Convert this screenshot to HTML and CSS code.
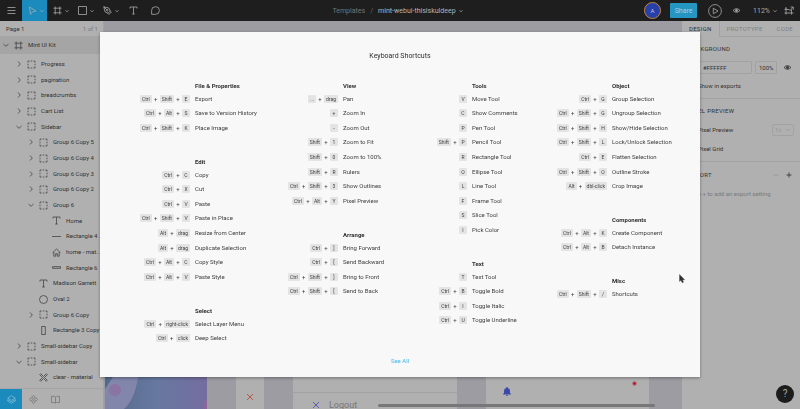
FILE: index.html
```html
<!DOCTYPE html>
<html lang="en">
<head>
<meta charset="utf-8">
<title>mint-webui-thisiskuldeep</title>
<link rel="stylesheet" href="styles.css">
</head>
<body>
<svg class="defs" aria-hidden="true">
  <symbol id="caret" viewBox="0 0 6 6"><path d="M1.5 2.3 3 3.8 4.5 2.3"/></symbol>
  <symbol id="right" viewBox="0 0 8 8"><path d="M3 1.5 5.3 4 3 6.5"/></symbol>
  <symbol id="down" viewBox="0 0 8 8"><path d="M1.5 3 4 5.3 6.5 3"/></symbol>
  <symbol id="group" viewBox="0 0 9 9"><path d="M1 2.5V1h1.500M3.700 1h1.600M6.500 1H8v1.500M8 3.700v1.600M8 6.500V8H6.500M5.300 8H3.700M2.500 8H1V6.500M1 5.300V3.700"/></symbol>
  <symbol id="frame" viewBox="0 0 9 9"><path d="M2.200.5v8M6.800.5v8M.5 2.200h8M.5 6.800h8"/></symbol>
  <symbol id="text" viewBox="0 0 9 9"><path d="M1 2.500V1h7v1.500M4.500 1v7M3.200 8h2.600"/></symbol>
  <symbol id="eye" viewBox="0 0 9 9"><path d="M1 4.500Q4.500.8 8 4.500Q4.500 8.200 1 4.500Z"/><circle cx="4.500" cy="4.500" r="1.100" fill="currentColor"/></symbol>
</svg>

<header class="toolbar">
  <div class="tools">
    <button class="menu" aria-label="Menu"><svg viewBox="0 0 9 9"><path d="M.5 1.500h8M.5 4.500h8M.5 7.500h8"/></svg></button>
    <button class="tool active" aria-label="Move"><svg viewBox="0 0 9 9"><path d="M1.500 1 8 5 4.700 5.700 2.500 8.300Z"/></svg><svg class="caret"><use href="#caret"/></svg></button>
    <button class="tool" aria-label="Frame"><svg><use href="#frame"/></svg><svg class="caret"><use href="#caret"/></svg></button>
    <button class="tool" aria-label="Rectangle"><svg viewBox="0 0 9 9"><path d="M.5.5h8v8h-8Z"/></svg><svg class="caret"><use href="#caret"/></svg></button>
    <button class="tool" aria-label="Pen"><svg viewBox="0 0 9 9"><path d="M.8.8 5.800 2 7.300 5 5 7.300 2 5.800ZM.8.8 4 4M5 7.300 6 8.400 8.400 6 7.300 5"/><circle cx="4.300" cy="4.300" r=".8"/></svg><svg class="caret"><use href="#caret"/></svg></button>
    <button class="single" aria-label="Text"><svg><use href="#text"/></svg></button>
    <button class="single" aria-label="Comment"><svg viewBox="0 0 9 9"><path d="M.6 8.300V4.500A3.900 3.800 0 1 1 4.500 8.300Z"/></svg></button>
  </div>
  <div class="crumbs"><a href="#">Templates</a><span>/</span><b>mint-webui-thisiskuldeep</b><svg class="caret"><use href="#caret"/></svg></div>
  <div class="actions">
    <span class="avatar">A</span>
    <button class="share">Share</button>
    <button class="play" aria-label="Present"><svg viewBox="0 0 14 14"><circle cx="7" cy="7" r="6.400"/><path d="M5.300 4.200 10 7 5.300 9.800Z"/></svg></button>
    <button class="view" aria-label="View"><svg><use href="#eye"/></svg></button>
    <button class="percent">112%<svg class="caret"><use href="#caret"/></svg></button>
    <button class="snap" aria-label="Layout grid"><svg viewBox="0 0 10 9"><path d="M2 2v6.500M7.500 3.500v5M.5 3.500h5M.5 7h9M5.500 5.200 9 1.200M6.500 1h2.800v2.800M1 2h2"/></svg></button>
  </div>
</header>

<main class="workspace">
  <aside class="layers">
    <div class="page"><span>Page 1</span><span class="count">1 of 1</span></div>
    <div class="layer root"><svg class="chev"><use href="#down"/></svg><svg><use href="#frame"/></svg><span>Mint UI Kit</span></div>
    <ul class="tree">
      <li class="layer l1"><svg class="chev"><use href="#right"/></svg><svg><use href="#group"/></svg><span>Progress</span></li>
      <li class="layer l1"><svg class="chev"><use href="#right"/></svg><svg><use href="#group"/></svg><span>pagination</span></li>
      <li class="layer l1"><svg class="chev"><use href="#right"/></svg><svg><use href="#group"/></svg><span>breadcrumbs</span></li>
      <li class="layer l1"><svg class="chev"><use href="#right"/></svg><svg><use href="#group"/></svg><span>Cart List</span></li>
      <li class="layer l1"><svg class="chev"><use href="#down"/></svg><svg><use href="#group"/></svg><span>Sidebar</span></li>
      <li class="layer l2"><svg class="chev"><use href="#right"/></svg><svg><use href="#group"/></svg><span>Group 6 Copy 5</span></li>
      <li class="layer l2"><svg class="chev"><use href="#right"/></svg><svg><use href="#group"/></svg><span>Group 6 Copy 4</span></li>
      <li class="layer l2"><svg class="chev"><use href="#right"/></svg><svg><use href="#group"/></svg><span>Group 6 Copy 3</span></li>
      <li class="layer l2"><svg class="chev"><use href="#right"/></svg><svg><use href="#group"/></svg><span>Group 6 Copy 2</span></li>
      <li class="layer l2"><svg class="chev"><use href="#down"/></svg><svg><use href="#group"/></svg><span>Group 6</span></li>
      <li class="layer l3"><svg class="chev"></svg><svg><use href="#text"/></svg><span>Home</span></li>
      <li class="layer l3"><svg class="chev"></svg><svg viewBox="0 0 9 9"><path d="M0 4.500h9"/></svg><span>Rectangle 4 ...</span></li>
      <li class="layer l3"><svg class="chev"></svg><svg viewBox="0 0 9 9"><path d="M.5 4.800 4.500 1l4 3.800M1.800 4v4.200h1.900V5.600h1.600v2.600h1.900V4"/></svg><span>home - mat...</span></li>
      <li class="layer l3"><svg class="chev"></svg><svg viewBox="0 0 9 9"><path d="M.5 3.700h8v1.600h-8Z"/></svg><span>Rectangle 6</span></li>
      <li class="layer l2"><svg class="chev"></svg><svg><use href="#text"/></svg><span>Madison Garrett</span></li>
      <li class="layer l2"><svg class="chev"></svg><svg viewBox="0 0 9 9"><circle cx="4.500" cy="4.500" r="4"/></svg><span>Oval 2</span></li>
      <li class="layer l2"><svg class="chev"><use href="#right"/></svg><svg><use href="#group"/></svg><span>Group 6 Copy</span></li>
      <li class="layer l2"><svg class="chev"></svg><svg viewBox="0 0 9 9"><path d="M2.700.5h3.600v8H2.700Z"/></svg><span>Rectangle 3 Copy</span></li>
      <li class="layer l1"><svg class="chev"><use href="#right"/></svg><svg><use href="#group"/></svg><span>Small-sidebar Copy</span></li>
      <li class="layer l1"><svg class="chev"><use href="#down"/></svg><svg><use href="#group"/></svg><span>Small-sidebar</span></li>
      <li class="layer l2"><svg class="chev"></svg><svg viewBox="0 0 9 9"><path d="M.7 1.700 1.700.7 4.500 3.500 7.300.7 8.300 1.700 5.500 4.500 8.300 7.300 7.300 8.300 4.500 5.500 1.700 8.300.7 7.300 3.500 4.500Z"/></svg><span>clear - material</span></li>
    </ul>
    <nav class="libs">
      <button class="on" aria-label="Layers"><svg viewBox="0 0 9 9"><path d="M4.500.7 8.300 3 4.500 5.300.7 3ZM.7 4.500v1.500l3.800 2.300L8.300 6V4.500M.7 4.500l3.800 2.300 3.800-2.300"/></svg></button>
      <button aria-label="Components"><svg viewBox="0 0 9 9"><path d="M4.500.3 6.200 2 4.500 3.700 2.800 2ZM4.500 5.300 6.200 7 4.500 8.700 2.800 7ZM2 2.800 3.700 4.500 2 6.200.3 4.500ZM7 2.800 8.700 4.500 7 6.200 5.300 4.500Z"/></svg></button>
      <button aria-label="Team library"><svg viewBox="0 0 9 9"><path d="M.5 1.300h3l1 .7 1-.7h3v6.200h-3l-1 .7-1-.7h-3ZM4.500 2v6"/></svg></button>
    </nav>
  </aside>

  <section class="canvas">
    <div class="photo"><svg viewBox="0 0 102 372" preserveAspectRatio="xMidYMax slice">
      <defs><linearGradient id="sky"><stop offset="0" stop-color="#536989"/><stop offset=".5" stop-color="#6778a0"/><stop offset="1" stop-color="#746da0"/></linearGradient></defs>
      <rect width="102" height="372" fill="url(#sky)"/><path d="M0 352 8 340H33Q30 362 19 372H0Z" fill="#8286ab"/><circle cx="10" cy="353" r="6" fill="#8a74a4"/><path d="M102 362q-6 5-4 10h4Z" fill="#8a669a"/></svg></div>
    <div class="board narrow"><svg class="cross red" viewBox="0 0 8 8"><path d="M1 1l6 6M7 1 1 7"/></svg></div>
    <div class="board logout"><div class="entry"><svg class="cross blue" viewBox="0 0 8 8"><path d="M1 1l6 6M7 1 1 7"/></svg><span>Logout</span></div></div>
    <div class="board alerts"><svg class="bell" viewBox="0 0 8 9"><path d="M4 0q.8 0 .8 1Q7 1.700 7 4v2l1 1v.5H0V7l1-1V4q0-2.300 2.200-3Q3.200 0 4 0ZM3 8h2Q4.800 9 4 9T3 8Z"/></svg><i class="dot"></i></div>
    <div class="scroll"></div>
  </section>

  <aside class="inspector">
    <nav class="tabs"><button class="on">DESIGN</button><button>PROTOTYPE</button><button>CODE</button></nav>
    <section class="block">
      <h2>BACKGROUND</h2>
      <div class="fill"><input class="hex" aria-label="Background colour" value="#FFFFFF"><input class="opacity" aria-label="Opacity" value="100%"><svg><use href="#eye"/></svg></div>
      <label class="check"><input type="checkbox">Show in exports</label>
    </section>
    <section class="block">
      <h2>PIXEL PREVIEW</h2>
      <div class="line"><label class="check"><input type="checkbox">Pixel Preview</label><span class="scale"><select aria-label="Preview scale"><option>1x</option></select><svg class="caret"><use href="#caret"/></svg></span></div>
      <label class="check"><input type="checkbox">Pixel Grid</label>
    </section>
    <section class="block">
      <div class="line"><h2>EXPORT</h2><span class="pm"><svg class="off" viewBox="0 0 6 6"><path d="M.5 3h5"/></svg><svg viewBox="0 0 6 6"><path d="M.5 3h5M3 .5v5"/></svg></span></div>
      <p>Click + to add an export setting</p>
    </section>
  </aside>
</main>

<button class="help" aria-label="Help">?</button>

<div class="overlay">
<div class="dialog" role="dialog" aria-labelledby="dlg-title">
  <h1 id="dlg-title">Keyboard Shortcuts</h1>
  <div class="columns">
    <div class="column">
      <section><h3>File &amp; Properties</h3><ul>
        <li><span><kbd>Ctrl</kbd><i>+</i><kbd>Shift</kbd><i>+</i><kbd>E</kbd></span>Export</li>
        <li><span><kbd>Ctrl</kbd><i>+</i><kbd>Alt</kbd><i>+</i><kbd>S</kbd></span>Save to Version History</li>
        <li><span><kbd>Ctrl</kbd><i>+</i><kbd>Shift</kbd><i>+</i><kbd>K</kbd></span>Place Image</li>
      </ul></section>
      <section><h3>Edit</h3><ul>
        <li><span><kbd>Ctrl</kbd><i>+</i><kbd>C</kbd></span>Copy</li>
        <li><span><kbd>Ctrl</kbd><i>+</i><kbd>X</kbd></span>Cut</li>
        <li><span><kbd>Ctrl</kbd><i>+</i><kbd>V</kbd></span>Paste</li>
        <li><span><kbd>Ctrl</kbd><i>+</i><kbd>Shift</kbd><i>+</i><kbd>V</kbd></span>Paste in Place</li>
        <li><span><kbd>Alt</kbd><i>+</i><kbd>drag</kbd></span>Resize from Center</li>
        <li><span><kbd>Alt</kbd><i>+</i><kbd>drag</kbd></span>Duplicate Selection</li>
        <li><span><kbd>Ctrl</kbd><i>+</i><kbd>Alt</kbd><i>+</i><kbd>C</kbd></span>Copy Style</li>
        <li><span><kbd>Ctrl</kbd><i>+</i><kbd>Alt</kbd><i>+</i><kbd>V</kbd></span>Paste Style</li>
      </ul></section>
      <section><h3>Select</h3><ul>
        <li><span><kbd>Ctrl</kbd><i>+</i><kbd>right-click</kbd></span>Select Layer Menu</li>
        <li><span><kbd>Ctrl</kbd><i>+</i><kbd>click</kbd></span>Deep Select</li>
      </ul></section>
    </div>
    <div class="column">
      <section><h3>View</h3><ul>
        <li><span><kbd>...</kbd><i>+</i><kbd>drag</kbd></span>Pan</li>
        <li><span><kbd>+</kbd></span>Zoom In</li>
        <li><span><kbd>-</kbd></span>Zoom Out</li>
        <li><span><kbd>Shift</kbd><i>+</i><kbd>1</kbd></span>Zoom to Fit</li>
        <li><span><kbd>Shift</kbd><i>+</i><kbd>0</kbd></span>Zoom to 100%</li>
        <li><span><kbd>Shift</kbd><i>+</i><kbd>R</kbd></span>Rulers</li>
        <li><span><kbd>Ctrl</kbd><i>+</i><kbd>Shift</kbd><i>+</i><kbd>3</kbd></span>Show Outlines</li>
        <li><span><kbd>Ctrl</kbd><i>+</i><kbd>Alt</kbd><i>+</i><kbd>Y</kbd></span>Pixel Preview</li>
      </ul></section>
      <section><h3>Arrange</h3><ul>
        <li><span><kbd>Ctrl</kbd><i>+</i><kbd>]</kbd></span>Bring Forward</li>
        <li><span><kbd>Ctrl</kbd><i>+</i><kbd>[</kbd></span>Send Backward</li>
        <li><span><kbd>Ctrl</kbd><i>+</i><kbd>Shift</kbd><i>+</i><kbd>]</kbd></span>Bring to Front</li>
        <li><span><kbd>Ctrl</kbd><i>+</i><kbd>Shift</kbd><i>+</i><kbd>[</kbd></span>Send to Back</li>
      </ul></section>
    </div>
    <div class="column">
      <section><h3>Tools</h3><ul>
        <li><span><kbd>V</kbd></span>Move Tool</li>
        <li><span><kbd>C</kbd></span>Show Comments</li>
        <li><span><kbd>P</kbd></span>Pen Tool</li>
        <li><span><kbd>Shift</kbd><i>+</i><kbd>P</kbd></span>Pencil Tool</li>
        <li><span><kbd>R</kbd></span>Rectangle Tool</li>
        <li><span><kbd>O</kbd></span>Ellipse Tool</li>
        <li><span><kbd>L</kbd></span>Line Tool</li>
        <li><span><kbd>F</kbd></span>Frame Tool</li>
        <li><span><kbd>S</kbd></span>Slice Tool</li>
        <li><span><kbd>I</kbd></span>Pick Color</li>
      </ul></section>
      <section><h3>Text</h3><ul>
        <li><span><kbd>T</kbd></span>Text Tool</li>
        <li><span><kbd>Ctrl</kbd><i>+</i><kbd>B</kbd></span>Toggle Bold</li>
        <li><span><kbd>Ctrl</kbd><i>+</i><kbd>I</kbd></span>Toggle Italic</li>
        <li><span><kbd>Ctrl</kbd><i>+</i><kbd>U</kbd></span>Toggle Underline</li>
      </ul></section>
    </div>
    <div class="column">
      <section><h3>Object</h3><ul>
        <li><span><kbd>Ctrl</kbd><i>+</i><kbd>G</kbd></span>Group Selection</li>
        <li><span><kbd>Ctrl</kbd><i>+</i><kbd>Shift</kbd><i>+</i><kbd>G</kbd></span>Ungroup Selection</li>
        <li><span><kbd>Ctrl</kbd><i>+</i><kbd>Shift</kbd><i>+</i><kbd>H</kbd></span>Show/Hide Selection</li>
        <li><span><kbd>Ctrl</kbd><i>+</i><kbd>Shift</kbd><i>+</i><kbd>L</kbd></span>Lock/Unlock Selection</li>
        <li><span><kbd>Ctrl</kbd><i>+</i><kbd>E</kbd></span>Flatten Selection</li>
        <li><span><kbd>Ctrl</kbd><i>+</i><kbd>Shift</kbd><i>+</i><kbd>O</kbd></span>Outline Stroke</li>
        <li><span><kbd>Alt</kbd><i>+</i><kbd>dbl-click</kbd></span>Crop Image</li>
      </ul></section>
      <section><h3>Components</h3><ul>
        <li><span><kbd>Ctrl</kbd><i>+</i><kbd>Alt</kbd><i>+</i><kbd>K</kbd></span>Create Component</li>
        <li><span><kbd>Ctrl</kbd><i>+</i><kbd>Alt</kbd><i>+</i><kbd>B</kbd></span>Detach Instance</li>
      </ul></section>
      <section><h3>Misc</h3><ul>
        <li><span><kbd>Ctrl</kbd><i>+</i><kbd>Shift</kbd><i>+</i><kbd>/</kbd></span>Shortcuts</li>
      </ul></section>
    </div>
  </div>
  <a class="all" href="#">See All</a>
  <svg class="pointer" viewBox="0 0 6 9"><path d="M.5.500v7L2 6.300 3.200 8.800 4.500 8.200 3.500 5.800H5.700Z"/></svg>
</div>
</div>
</body>
</html>
```
FILE: styles.css
```css
* { box-sizing: border-box; margin: 0; padding: 0; }
body {
  display: grid;
  grid-template-rows: 21px minmax(0, 1fr);
  height: 100vh;
  overflow: hidden;
  font: 6px/12px Roboto, sans-serif;
  color: #303030;
  background: #9d9da0;
}
ul { list-style: none; }
button, input, select { font: inherit; color: inherit; border: 0; background: none; }
svg { width: 9px; height: 9px; flex: none; fill: none; stroke: currentColor; stroke-width: 0.8; display: block; }
.defs { position: absolute; width: 0; height: 0; }
.caret { width: 6px; height: 6px; }

/* Top toolbar */
.toolbar {
  display: grid;
  grid-template-columns: 1fr auto 1fr;
  background: #1e1e1e;
  color: #a9a9a9;
  font-size: 7px;
}
.tools, .crumbs, .actions { display: flex; align-items: center; }
.tools button { display: flex; align-items: center; height: 21px; }
.tools .menu { width: 22px; justify-content: center; }
.tools .tool { width: 25px; gap: 2px; padding-left: 6px; }
.tools .single { width: 22px; justify-content: center; }
.tools .active { background: #1b8bbd; }
.crumbs { gap: 5px; padding-right: 4px; }
.crumbs a { color: #747474; text-decoration: none; }
.crumbs span { color: #666; }
.crumbs b { font-weight: 400; color: #b5b5b5; }
.crumbs .caret { margin-left: -3px; }
.actions { justify-content: flex-end; padding-right: 6px; }
.avatar {
  width: 17px; height: 17px;
  border: 1px solid #c2843c;
  border-radius: 50%;
  background: #2740a8;
  color: #bcc4e6;
  text-align: center;
  line-height: 15px;
  font-size: 6px;
}
.share { width: 27px; height: 15px; margin-left: 9px; border-radius: 1px; background: #2595c2; color: #a6cfe0; }
.play { margin-left: 11px; }
.play svg { width: 14px; height: 14px; }
.view { margin-left: 10px; }
.percent { display: flex; align-items: center; gap: 2px; margin-left: 12px; }
.snap { margin-left: 6px; }
.snap svg { width: 10px; }

.workspace {
  display: grid;
  grid-template-columns: 104px 1fr 118px;
  grid-template-rows: minmax(0, 1fr);
}

/* Layers panel */
.layers { display: flex; flex-direction: column; min-height: 0; background: #b0b0b0; border-right: 1px solid #a2a2a2; }
.page { display: flex; flex: none; justify-content: space-between; align-items: center; height: 15px; padding: 0 5px 0 6px; }
.count { color: #777; }
.layer { display: flex; flex: none; align-items: center; height: 16px; padding-right: 4px; white-space: nowrap; }
.layer svg { margin-left: 4px; color: #444; }
.layer .chev { width: 8px; height: 8px; margin-left: 0; }
.layer span { margin-left: 5px; }
.root { height: 18px; padding-left: 2px; background: #a5a5a5; }
.tree { flex: 1; padding-top: 2px; min-height: 0; overflow: hidden; }
.tree .layer:nth-child(3n+2) { height: 15px; }
.l1 { padding-left: 15px; }
.l2 { padding-left: 27px; }
.l3 { padding-left: 40px; }
.libs { display: flex; flex: none; height: 21px; border-top: 1px solid #a5a5a5; }
.libs button { display: grid; place-items: center; width: 22px; color: #777; }
.libs .on { background: #1b8bbd; color: #79b9d6; }

/* Canvas: artboards placed on a free surface */
.canvas {
  position: relative;
  display: grid;
  grid-template-columns: 1fr 102fr 29fr 28fr 29fr 164fr 29fr 163fr 33fr;
  grid-template-rows: minmax(0, 1fr);
  background: #9d9ca3;
}
.photo { grid-column: 2; overflow: hidden; margin-top: 16px; }
.photo svg { width: 100%; height: 100%; stroke: none; }
.board { position: relative; background: #b0b0b0; margin-top: 16px; }
.narrow { grid-column: 4; }
.logout { grid-column: 6; display: flex; flex-direction: column; justify-content: flex-end; font-size: 9px; line-height: 10px; color: #777; }
.entry { display: flex; align-items: center; gap: 9px; height: 17px; padding: 8px 0 0 19px; border-top: 1px solid #a2a2a2; }
.alerts { grid-column: 8; }
.cross { width: 8px; height: 8px; }
.red { position: absolute; left: 10px; bottom: 8px; color: #b5402c; }
.blue { color: #444cb4; }
.bell { position: absolute; left: 17px; bottom: 13px; width: 8px; fill: #3b48a8; stroke: none; }
.dot { position: absolute; right: 12px; bottom: 23px; width: 5px; height: 5px; border: 1px solid #b0888e; border-radius: 50%; background: #b02232; }
.scroll { position: absolute; left: 274px; right: 27px; bottom: 2px; height: 3px; border-radius: 2px; background: #777; }

/* Inspector */
.inspector { background: #b0b0b0; }
.tabs { display: flex; height: 16px; }
.tabs button { flex: 1 0 auto; letter-spacing: 0.05em; color: #808080; border-bottom: 1px solid #a2a2a2; }
.tabs .on { color: #303030; border-bottom: 0; border-right: 1px solid #a2a2a2; }
.inspector h2 { font-size: 6px; font-weight: 400; letter-spacing: 0.05em; }
.block { padding: 6px; border-bottom: 1px solid #a2a2a2; }
.fill { display: flex; align-items: center; gap: 3px; margin: 6px 0; }
.fill input { height: 13px; border: 1px solid #a2a2a2; border-radius: 1px; min-width: 0; }
.fill .hex { flex: 1; padding-left: 14px; }
.fill .opacity { width: 22px; padding-left: 3px; }
.fill svg { margin: 0 2px 0 3px; }
.check { display: flex; align-items: center; gap: 4px; height: 12px; }
.check input { width: 6px; height: 6px; }
.line { display: flex; justify-content: space-between; align-items: center; margin: 7px 0; }
.scale {
  display: flex;
  align-items: center;
  width: 22px;
  height: 12px;
  padding: 0 2px;
  border: 1px solid #a2a2a2;
  border-radius: 2px;
  color: #969696;
}
.scale select { appearance: none; flex: 1; min-width: 0; height: 10px; line-height: 10px; }
.block:last-child { border: 0; padding-top: 0; }
.block p { color: #7a7a7a; }
.pm { display: flex; gap: 7px; padding-right: 2px; }
.pm svg { width: 6px; height: 6px; }
.pm .off { color: #969696; }

.help {
  position: fixed; right: 6px; bottom: 6px;
  width: 18px; height: 18px;
  border-radius: 50%;
  background: #1c1c1c;
  color: #a9a9a9;
  font-size: 10px;
  line-height: 18px;
}

/* Shortcuts dialog */
.overlay { position: fixed; inset: 0; display: flex; align-items: center; justify-content: center; pointer-events: none; }
.dialog {
  position: relative;
  width: 75%;
  padding: 19px 0 10px;
  background: #f8f8f8;
  box-shadow: 0 1px 3px rgba(0, 0, 0, 0.35);
  text-align: center;
  pointer-events: auto;
}
.dialog h1 { margin-bottom: 18px; font-size: 7px; line-height: 11px; font-weight: 400; }
.columns {
  display: grid;
  grid-template-columns: minmax(0, 148fr) minmax(0, 129fr) minmax(0, 140fr) minmax(0, 105fr);
  padding: 0 39px;
  text-align: left;
  color: #404040;
}
.column { display: flex; flex-direction: column; gap: 21px; }
.column h3 { padding-left: 56px; font-size: 6px; line-height: 11px; font-weight: 700; color: #303030; }
.column li { display: flex; align-items: center; height: 15px; white-space: nowrap; }
.column li:nth-child(5n+2), .column li:nth-child(5n+4) { height: 14px; }
.column li span { display: flex; justify-content: flex-end; align-items: center; flex: none; width: 51px; margin-right: 5px; }
kbd {
  min-width: 8px;
  padding: 0 2px;
  border-radius: 1px;
  background: #e4e4e4;
  font: 5px/8px Roboto, sans-serif;
  text-align: center;
}
.column i { width: 8px; font: 6px/8px Roboto, sans-serif; text-align: center; }
.all { display: block; margin-top: 10px; color: #3db8ec; text-decoration: none; }
.pointer { position: absolute; right: 15px; bottom: 94px; width: 6px; height: 9px; fill: #303030; stroke: #303030; stroke-width: 0.3; }
```
